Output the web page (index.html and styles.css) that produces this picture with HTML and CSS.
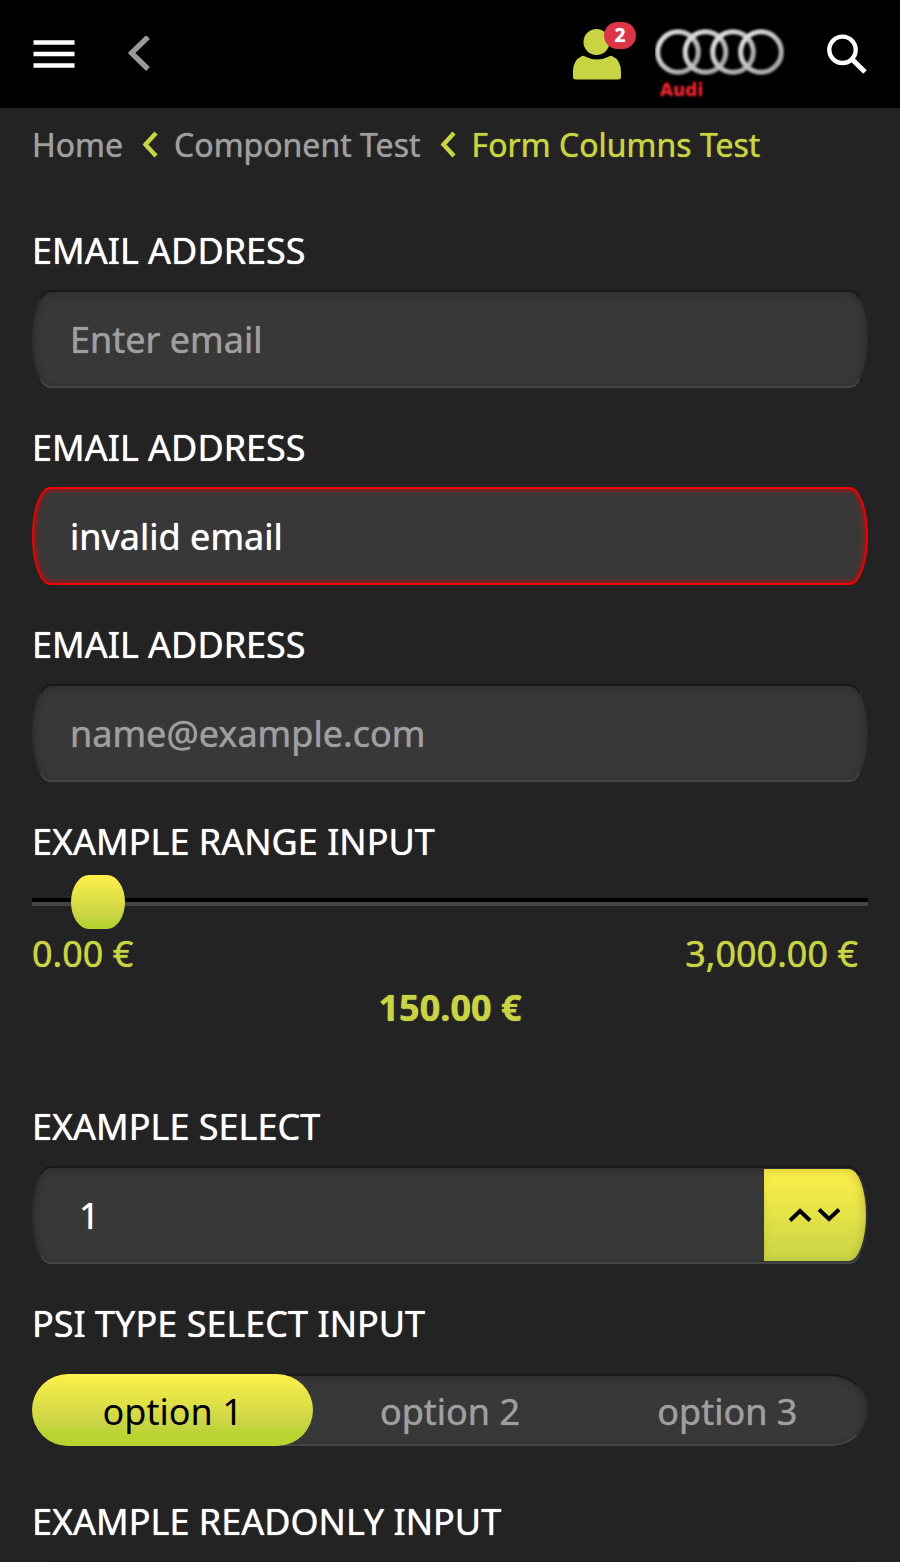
FILE: index.html
```html
<!DOCTYPE html>
<html lang="en">
<head>
<meta charset="utf-8">
<meta name="viewport" content="width=device-width, initial-scale=1">
<title>Form Columns Test</title>
<link rel="stylesheet" href="styles.css">
</head>
<body>
<header class="topbar">
  <button class="icon-button menu" type="button" aria-label="Menu">
    <svg width="42" height="28" viewBox="0 0 42 28"><path d="M0.500 2.5h41M0.500 14h41M0.500 25.5h41" stroke="#fff" stroke-width="4.6"/></svg>
  </button>
  <button class="icon-button back" type="button" aria-label="Back">
    <svg width="22" height="36" viewBox="0 0 22 36"><path d="M20 1 3.500 17 20 33" fill="none" stroke="#9a9a9a" stroke-width="5.400"/></svg>
  </button>
  <button class="icon-button user" type="button" aria-label="Notifications">
    <svg width="48" height="51" viewBox="0 0 48 51" fill="#c8d444"><circle cx="23.500" cy="13" r="13"/><path d="M9 27Q10.500 26.500 12 27.500Q24 33.500 36 27.500Q37.500 26.500 39 27Q48 31 48 43V48Q48 50.500 45 50.500H3Q0 50.500 0 48V43Q0 31 9 27Z"/></svg>
    <span class="badge">2</span>
  </button>
  <a class="brand" href="#">
    <svg width="130" height="48" viewBox="0 0 130 48" aria-hidden="true">
      <defs><linearGradient id="chrome" x1="0" y1="0" x2="1" y2="1"><stop offset="0" stop-color="#e4e6e8"/><stop offset=".5" stop-color="#c0c2c5"/><stop offset="1" stop-color="#9c9ea1"/></linearGradient></defs>
      <g class="rings" fill="none" stroke="url(#chrome)" stroke-width="5"><circle cx="23" cy="24" r="20.300"/><circle cx="50.500" cy="24" r="20.300"/><circle cx="78" cy="24" r="20.300"/><circle cx="106" cy="24" r="20.300"/></g>
    </svg>
    <span class="brand-name">Audi</span>
  </a>
  <button class="icon-button search" type="button" aria-label="Search">
    <svg width="40" height="40" viewBox="0 0 40 40" fill="none" stroke="#fff"><circle cx="15.500" cy="15.800" r="13.200" stroke-width="4.400"/><path d="M25 25.300 38 38" stroke-width="5"/></svg>
  </button>
</header>
<main class="page">
  <nav class="breadcrumb" aria-label="Breadcrumb">
    <a href="#">Home</a>
    <svg width="16" height="28" viewBox="0 0 16 28" aria-hidden="true"><path d="M14 2 3.500 13.500 14 25" fill="none" stroke="#c8d444" stroke-width="4.400"/></svg>
    <a href="#">Component Test</a>
    <svg width="16" height="28" viewBox="0 0 16 28" aria-hidden="true"><path d="M14 2 3.500 13.500 14 25" fill="none" stroke="#c8d444" stroke-width="4.400"/></svg>
    <a class="current" href="#" aria-current="page">Form Columns Test</a>
  </nav>
  <form class="form">
    <div class="group">
      <label class="label" for="email1">EMAIL ADDRESS</label>
      <input class="field" id="email1" type="email" placeholder="Enter email">
    </div>
    <div class="group">
      <label class="label" for="email2">EMAIL ADDRESS</label>
      <input class="field invalid" id="email2" type="text" value="invalid email" aria-invalid="true">
    </div>
    <div class="group">
      <label class="label" for="email3">EMAIL ADDRESS</label>
      <input class="field" id="email3" type="email" placeholder="name@example.com">
    </div>
    <div class="group range-group">
      <label class="label" for="range">EXAMPLE RANGE INPUT</label>
      <div class="range-control">
        <input class="range" id="range" type="range" min="0" max="3000" value="150">
        <div class="range-limits"><span>0.00 €</span><span>3,000.00 €</span></div>
        <output class="range-value" for="range">150.00 €</output>
      </div>
    </div>
    <div class="group">
      <label class="label" for="select">EXAMPLE SELECT</label>
      <div class="select-box">
        <select class="select" id="select"><option>1</option><option>2</option><option>3</option></select>
        <span class="select-arrows" aria-hidden="true">
          <svg width="52" height="14" viewBox="0 0 52 14" fill="none" stroke="#000" stroke-width="4"><path d="M1 12.500 11 3 21 12.500M30 1.500 40 11 50 1.500"/></svg>
        </span>
      </div>
    </div>
    <div class="group segment-group">
      <span class="label" id="psi-label">PSI TYPE SELECT INPUT</span>
      <div class="segments" role="radiogroup" aria-labelledby="psi-label">
        <label class="segment"><input type="radio" name="psi" checked><span>option 1</span></label>
        <label class="segment"><input type="radio" name="psi"><span>option 2</span></label>
        <label class="segment"><input type="radio" name="psi"><span>option 3</span></label>
      </div>
    </div>
    <div class="group">
      <label class="label" for="readonly">EXAMPLE READONLY INPUT</label>
      <input class="field" id="readonly" type="text" readonly>
    </div>
  </form>
</main>
</body>
</html>
```
FILE: styles.css
```css
* { box-sizing: border-box; }

body {
  display: flex;
  flex-direction: column;
  height: 100vh;
  margin: 0;
  background: #232323;
  color: #fff;
  font-family: "Noto Sans", sans-serif;
  font-size: 36px;
  text-shadow: 0 0 1px currentColor;
}

button, input, select { font: inherit; color: inherit; text-shadow: inherit; }
svg { display: block; }
a { color: inherit; text-decoration: none; }

.topbar {
  display: flex;
  align-items: center;
  flex: none;
  height: 108px;
  padding: 0 33px;
  background: #000;
}

.icon-button {
  position: relative;
  flex: none;
  padding: 0;
  border: 0;
  background: none;
}
.back { margin-left: 53px; }
.user { margin-left: auto; }

.badge {
  position: absolute;
  top: -7px;
  left: 31px;
  width: 32px;
  border-radius: 14px;
  background: #dc3545;
  color: #fff;
  font-size: 19px;
  font-weight: 700;
  line-height: 27px;
  text-align: center;
}

.brand {
  display: flex;
  flex-direction: column;
  margin: 24px 42px 0 34px;
}
.rings { filter: blur(1px); }
.brand-name {
  padding-left: 5px;
  color: #e8262f;
  font-family: "DejaVu Sans", sans-serif;
  font-size: 17px;
  font-weight: 700;
  line-height: 28px;
  filter: blur(1px);
}

.page {
  flex: 1;
  min-height: 0;
  padding: 15px 32px 32px;
  overflow-y: auto;
  scrollbar-width: none;
}

.breadcrumb {
  display: flex;
  align-items: center;
  margin-bottom: 59px;
  color: #9f9f9f;
  font-size: 32px;
  line-height: 44px;
}
.breadcrumb svg { margin: 0 16px 0 19px; }
.current { color: #c8d444; }

.form {
  display: flex;
  flex-direction: column;
  gap: 35px;
}
.group {
  display: flex;
  flex-direction: column;
  gap: 14px;
}
.label { line-height: 50px; }

.field,
.select-box,
.segments {
  width: 100%;
  border: 2px solid;
  border-color: #181818 #2e2e2e #444 #2e2e2e;
  background: #383838;
  box-shadow: inset 0 2px 10px rgba(0, 0, 0, 0.2);
}
.field,
.select-box {
  height: 98px;
  border-radius: 18px / 49px;
}
.field { padding: 0 36px; }
.field::placeholder { color: #9f9f9f; opacity: 1; }
.invalid {
  border-color: #f00000;
  box-shadow: inset 0 0 6px #e60000;
}

.range-group { gap: 8px; }
.range-control {
  display: flex;
  flex-direction: column;
  margin-bottom: 32px;
  color: #c8d444;
  line-height: 54px;
}
.range {
  width: 100%;
  height: 54px;
  margin: 0 0 -2px;
  appearance: none;
  background: linear-gradient(#000 50%, #444 50%) center / 100% 8px no-repeat;
}
.range::-webkit-slider-thumb {
  width: 54px;
  height: 54px;
  appearance: none;
  border-radius: 18px / 27px;
  background: linear-gradient(#fff04a, #c8d444 75%, #b8d431 92%);
}
.range-limits {
  display: flex;
  justify-content: space-between;
  padding-right: 10px;
}
.range-value {
  font-weight: 700;
  text-align: center;
}

.select-box {
  display: grid;
  grid-template-columns: 1fr 102px;
  padding: 1px 0;
}
.select {
  grid-area: 1 / 1 / 2 / 3;
  padding: 0 45px;
  appearance: none;
  border: 0;
  background: none;
}
.select option { color: #000; }
.select-arrows {
  grid-area: 1 / 2;
  display: grid;
  place-items: center;
  border-radius: 0 17px 17px 0 / 0 46px 46px 0;
  background: linear-gradient(#fff04a, #c8d444);
  box-shadow: inset -2px 2px 10px rgba(0, 0, 0, 0.15);
  pointer-events: none;
}

.segment-group {
  gap: 25px;
  margin-bottom: 16px;
}
.segments {
  display: flex;
  height: 72px;
  border-radius: 36px;
}
.segment {
  position: relative;
  display: flex;
  flex: 1;
  margin: -2px;
  color: #9f9f9f;
}
.segment input {
  position: absolute;
  inset: 0;
  margin: 0;
  opacity: 0;
}
.segment span {
  flex: 1;
  padding-top: 2px;
  border-radius: 36px;
  line-height: 72px;
  text-align: center;
}
.segment input:checked + span {
  background: linear-gradient(#fff04a, #c8d444 70%, #b8d431 84%);
  color: #000;
  text-shadow: none;
}
```
